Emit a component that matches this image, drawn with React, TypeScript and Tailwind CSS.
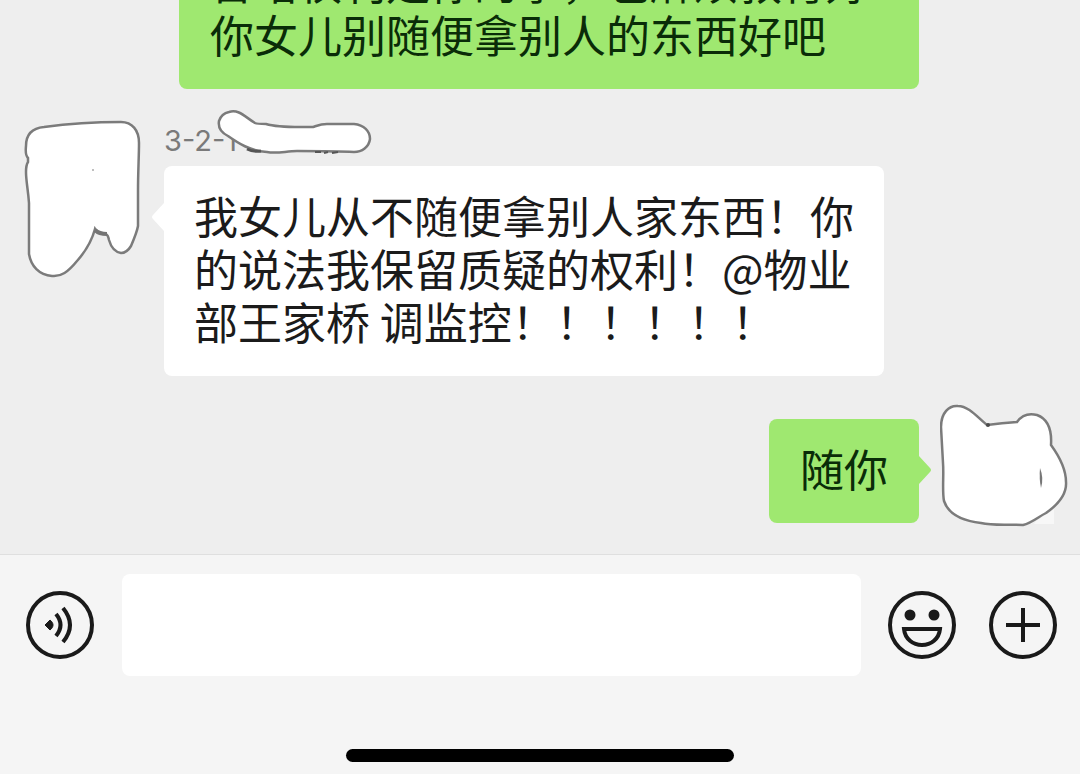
import { useState } from "react";

type BubbleProps = {
  text: string;
  mine?: boolean;
  tail?: boolean;
};

// Message bubble, green when it is mine and white when it is from someone else
function Bubble({ text, mine = false, tail = true }: BubbleProps) {
  return (
    <div
      className={
        mine
          ? "relative rounded-lg bg-[#9fe870] px-[31px] pb-7 pt-[23px] text-[#0a2c08]"
          : "relative rounded-lg bg-white px-[30px] pb-7 pt-[23px] text-[#1b1b1b]"
      }
    >
      <p className="text-[44px] leading-[53px]">{text}</p>
      {tail && mine && (
        <svg className="absolute left-full top-[35px] h-8 w-3" viewBox="0 0 12 32" fill="#9fe870">
          <path d="M0 2 L11 14 Q13 16 11 18 L0 30 Z" />
        </svg>
      )}
      {tail && !mine && (
        <svg className="absolute right-full top-[35px] h-8 w-3" viewBox="0 0 12 32" fill="#ffffff">
          <path d="M12 2 L1 14 Q-1 16 1 18 L12 30 Z" />
        </svg>
      )}
    </div>
  );
}

// Painted over avatar of the neighbour
function NeighbourAvatar() {
  return (
    <svg className="h-40 w-[118px] shrink-0" viewBox="0 0 118 160" fill="none">
      <path
        d="M2 27 C2 15 9 9 20 8 C42 5 66 3 97 3 C108 3 115 11 115 24 C115 38 114 52 114 72 V107 C113 113 110 120 107 127 C104 132 101 134 97 134 C91 133 87 128 85 121 Q84 116 82 115 Q74 115 71 110 C68 121 61 133 53 142 C44 153 37 158 28 157 C15 156 7 147 5 135 V84 C4 70 2 62 2 53 Q2 46 4 43 V39 Q1 36 2 27 Z"
        fill="#ffffff"
        stroke="#7b7b7b"
        strokeWidth="2.5"
      />
      <path d="M71 111 Q75 115 83 115" stroke="#747474" strokeWidth="4" />
      <circle cx="69" cy="51" r="1" fill="#aaaaaa" />
    </svg>
  );
}

// Painted over avatar of the user
function MyAvatar() {
  return (
    <svg className="h-[124px] w-32 shrink-0" viewBox="0 0 128 124" fill="none">
      <path d="M96 118 L114 106 V121 H94 Z" fill="#f7f7f7" />
      <path
        d="M1 24 C1 10 9 2 18 3 C29 3 38 15 47 22 Q62 20 77 19 C82 12 89 10 97 12 C108 16 112 26 111 42 C119 53 126 66 126 79 C127 92 116 103 106 110 C98 114 92 120 83 122 C69 121 54 123 41 120 C24 118 9 113 4 98 C2 88 4 72 3 60 Z"
        fill="#ffffff"
        stroke="#7b7b7b"
        strokeWidth="2.5"
      />
      <circle cx="48" cy="22" r="2" fill="#4b4b4b" />
      <path d="M100 65 Q104 75 101 85 Q99 76 100 65 Z" fill="#777777" />
    </svg>
  );
}

function NameScribble() {
  return (
    <svg className="absolute -top-2.5 left-[53px] h-12 w-[156px]" viewBox="0 0 156 48" fill="none">
      <path
        d="M12 3 C22 0 28 8 38 14 Q40 15 49 15 C62 19 80 18 96 18 C102 16 104 15 110 15 H137 C147 16 153 22 153 30 C152 38 145 43 137 43 C120 42 98 42 80 42 C69 42 60 45 50 43 C33 42 21 34 11 27 C3 23 1 18 2 12 C4 6 7 4 12 3 Z"
        fill="#ffffff"
        stroke="#7b7b7b"
        strokeWidth="2.5"
      />
      <path d="M30 40 Q36 43 44 42" stroke="#555555" strokeWidth="3" />
      <path d="M98 43 L104 43 M107 44 L111 43 M115 44 L121 43" stroke="#555555" strokeWidth="2" />
    </svg>
  );
}

function VoiceIcon() {
  return (
    <svg className="size-[68px]" viewBox="0 0 68 68" fill="none" stroke="#1a1a1a" strokeWidth="4">
      <circle cx="34" cy="34" r="32" />
      <path d="M19 34 L24 29 C28 32 28 36 24 39 Z" fill="#1a1a1a" strokeWidth="1" strokeLinejoin="round" />
      <path d="M30 23 Q39 34 30 45" />
      <path d="M37 17 Q51 34 37 51" />
    </svg>
  );
}

function SmileIcon() {
  return (
    <svg className="size-[68px]" viewBox="0 0 68 68" fill="none" stroke="#1a1a1a" strokeWidth="4">
      <circle cx="34" cy="34" r="32" />
      <circle cx="22" cy="24" r="5.5" fill="#1a1a1a" stroke="none" />
      <circle cx="46" cy="24" r="5.5" fill="#1a1a1a" stroke="none" />
      <path d="M16 38 H52 C51 48 43 54 34 54 C25 54 17 48 16 38 Z" />
    </svg>
  );
}

function PlusIcon() {
  return (
    <svg className="size-[68px]" viewBox="0 0 68 68" fill="none" stroke="#1a1a1a" strokeWidth="4">
      <circle cx="34" cy="34" r="32" />
      <path d="M17 34 H51 M34 17 V51" />
    </svg>
  );
}

function App() {
  const [message, setMessage] = useState("");

  return (
    <div className="flex h-screen flex-col bg-[#eeeeee] font-['Noto_Sans_CJK_SC',sans-serif]">
      {/* conversation, the newest message stays at the bottom */}
      <main className="flex min-h-0 flex-1 flex-col justify-end overflow-hidden pb-[27px]">
        <div className="flex shrink-0 justify-end pl-[179px] pr-[161px]">
          <Bubble mine tail={false} text="冒咯权利是你的事，也麻烦教育好你女儿别随便拿别人的东西好吧" />
        </div>

        <div className="mt-[30px] flex shrink-0 items-start gap-[22px] pl-6 pr-[196px]">
          <NeighbourAvatar />
          <div className="min-w-0">
            <div className="relative mb-[3px] h-11 font-[Inter,sans-serif] text-[29px] leading-[44px] text-[#7a7a7a]">
              3-2-1
              <NameScribble />
            </div>
            <Bubble text="我女儿从不随便拿别人家东西！你的说法我保留质疑的权利！@物业部王家桥 调监控！！！！！！" />
          </div>
        </div>

        <div className="mt-[27px] flex shrink-0 items-start justify-end gap-[21px] pr-3">
          <div className="mt-4">
            <Bubble mine text="随你" />
          </div>
          <MyAvatar />
        </div>
      </main>

      {/* input bar */}
      <footer className="shrink-0 border-t border-[#dfdfdf] bg-[#f5f5f5]">
        <div className="flex items-center pl-[26px] pr-[23px] pt-[19px]">
          <button type="button" aria-label="语音">
            <VoiceIcon />
          </button>
          <input
            type="text"
            aria-label="消息"
            className="ml-7 mr-[27px] h-[102px] min-w-0 flex-1 rounded-lg bg-white px-6 text-[44px] text-[#1b1b1b] outline-none"
            value={message}
            onChange={(event) => setMessage(event.target.value)}
          />
          <button type="button" aria-label="表情" className="mr-[33px]">
            <SmileIcon />
          </button>
          <button type="button" aria-label="更多">
            <PlusIcon />
          </button>
        </div>
        <div className="mx-auto mb-3 mt-[73px] h-[13px] w-[388px] rounded-full bg-black" />
      </footer>
    </div>
  );
}

export default App;
